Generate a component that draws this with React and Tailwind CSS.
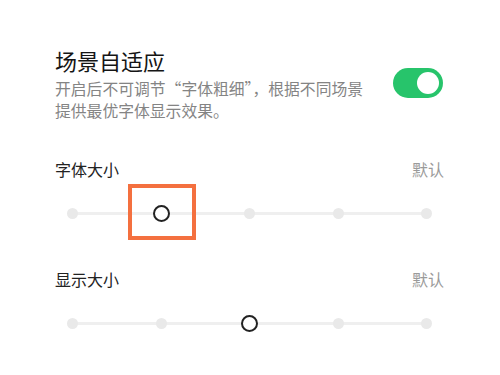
import React from 'react';

const font = { fontFamily: '"Noto Sans CJK SC", "Noto Sans", sans-serif' };

const Slider = ({ value }) => {
  return (
    <div className="relative ml-[9px] w-[371px] h-[17px]">
      <div className="absolute left-[8px] right-[8px] top-[7px] h-[3px] bg-[#efefef]" />
      <div className="relative flex justify-between items-center h-full">
        {[0, 1, 2, 3, 4].map((i) => (
          <div key={i} className="w-[17px] h-[17px] flex items-center justify-center">
            {i === value ? (
              <div className="w-[17px] h-[17px] rounded-full border-[2.5px] border-[#222] bg-white" />
            ) : (
              <div className="w-[11px] h-[11px] rounded-full bg-[#e9e9e9]" />
            )}
          </div>
        ))}
      </div>
    </div>
  );
};

const Row = ({ label }) => (
  <div className="flex items-center justify-between pr-[56px]">
    <span className="text-[16px] leading-[24px] text-[#222]">{label}</span>
    <span className="text-[16px] leading-[24px] text-[#9a9a9a]">默认</span>
  </div>
);

export default function App() {
  return (
    <div className="w-[500px] h-[375px] bg-white overflow-hidden pl-[55px]" style={font}>
      <div className="flex items-start justify-between pt-[45px] pr-[57px]">
        <div>
          <div className="text-[22px] leading-[30px] text-[#151515]">场景自适应</div>
          <div className="mt-[3px] text-[15.8px] leading-[22px] text-[#848484]">
            开启后不可调节“字体粗细”，根据不同场景
            <br />
            提供最优字体显示效果。
          </div>
        </div>
        <div className="w-[50px] h-[30px] rounded-full bg-[#27c46b] flex items-center justify-end pr-[4px] mt-[23px]">
          <div className="w-[22px] h-[22px] rounded-full bg-white" />
        </div>
      </div>

      <div className="mt-[35px]">
        <Row label="字体大小" />
      </div>
      <div className="relative mt-[24px]">
        <Slider value={1} />
        <div className="absolute left-[73px] top-[-21px] w-[68px] h-[56px] border-[4px] border-[#f4703f]" />
      </div>

      <div className="mt-[45px]">
        <Row label="显示大小" />
      </div>
      <div className="mt-[24px]">
        <Slider value={2} />
      </div>
    </div>
  );
}
